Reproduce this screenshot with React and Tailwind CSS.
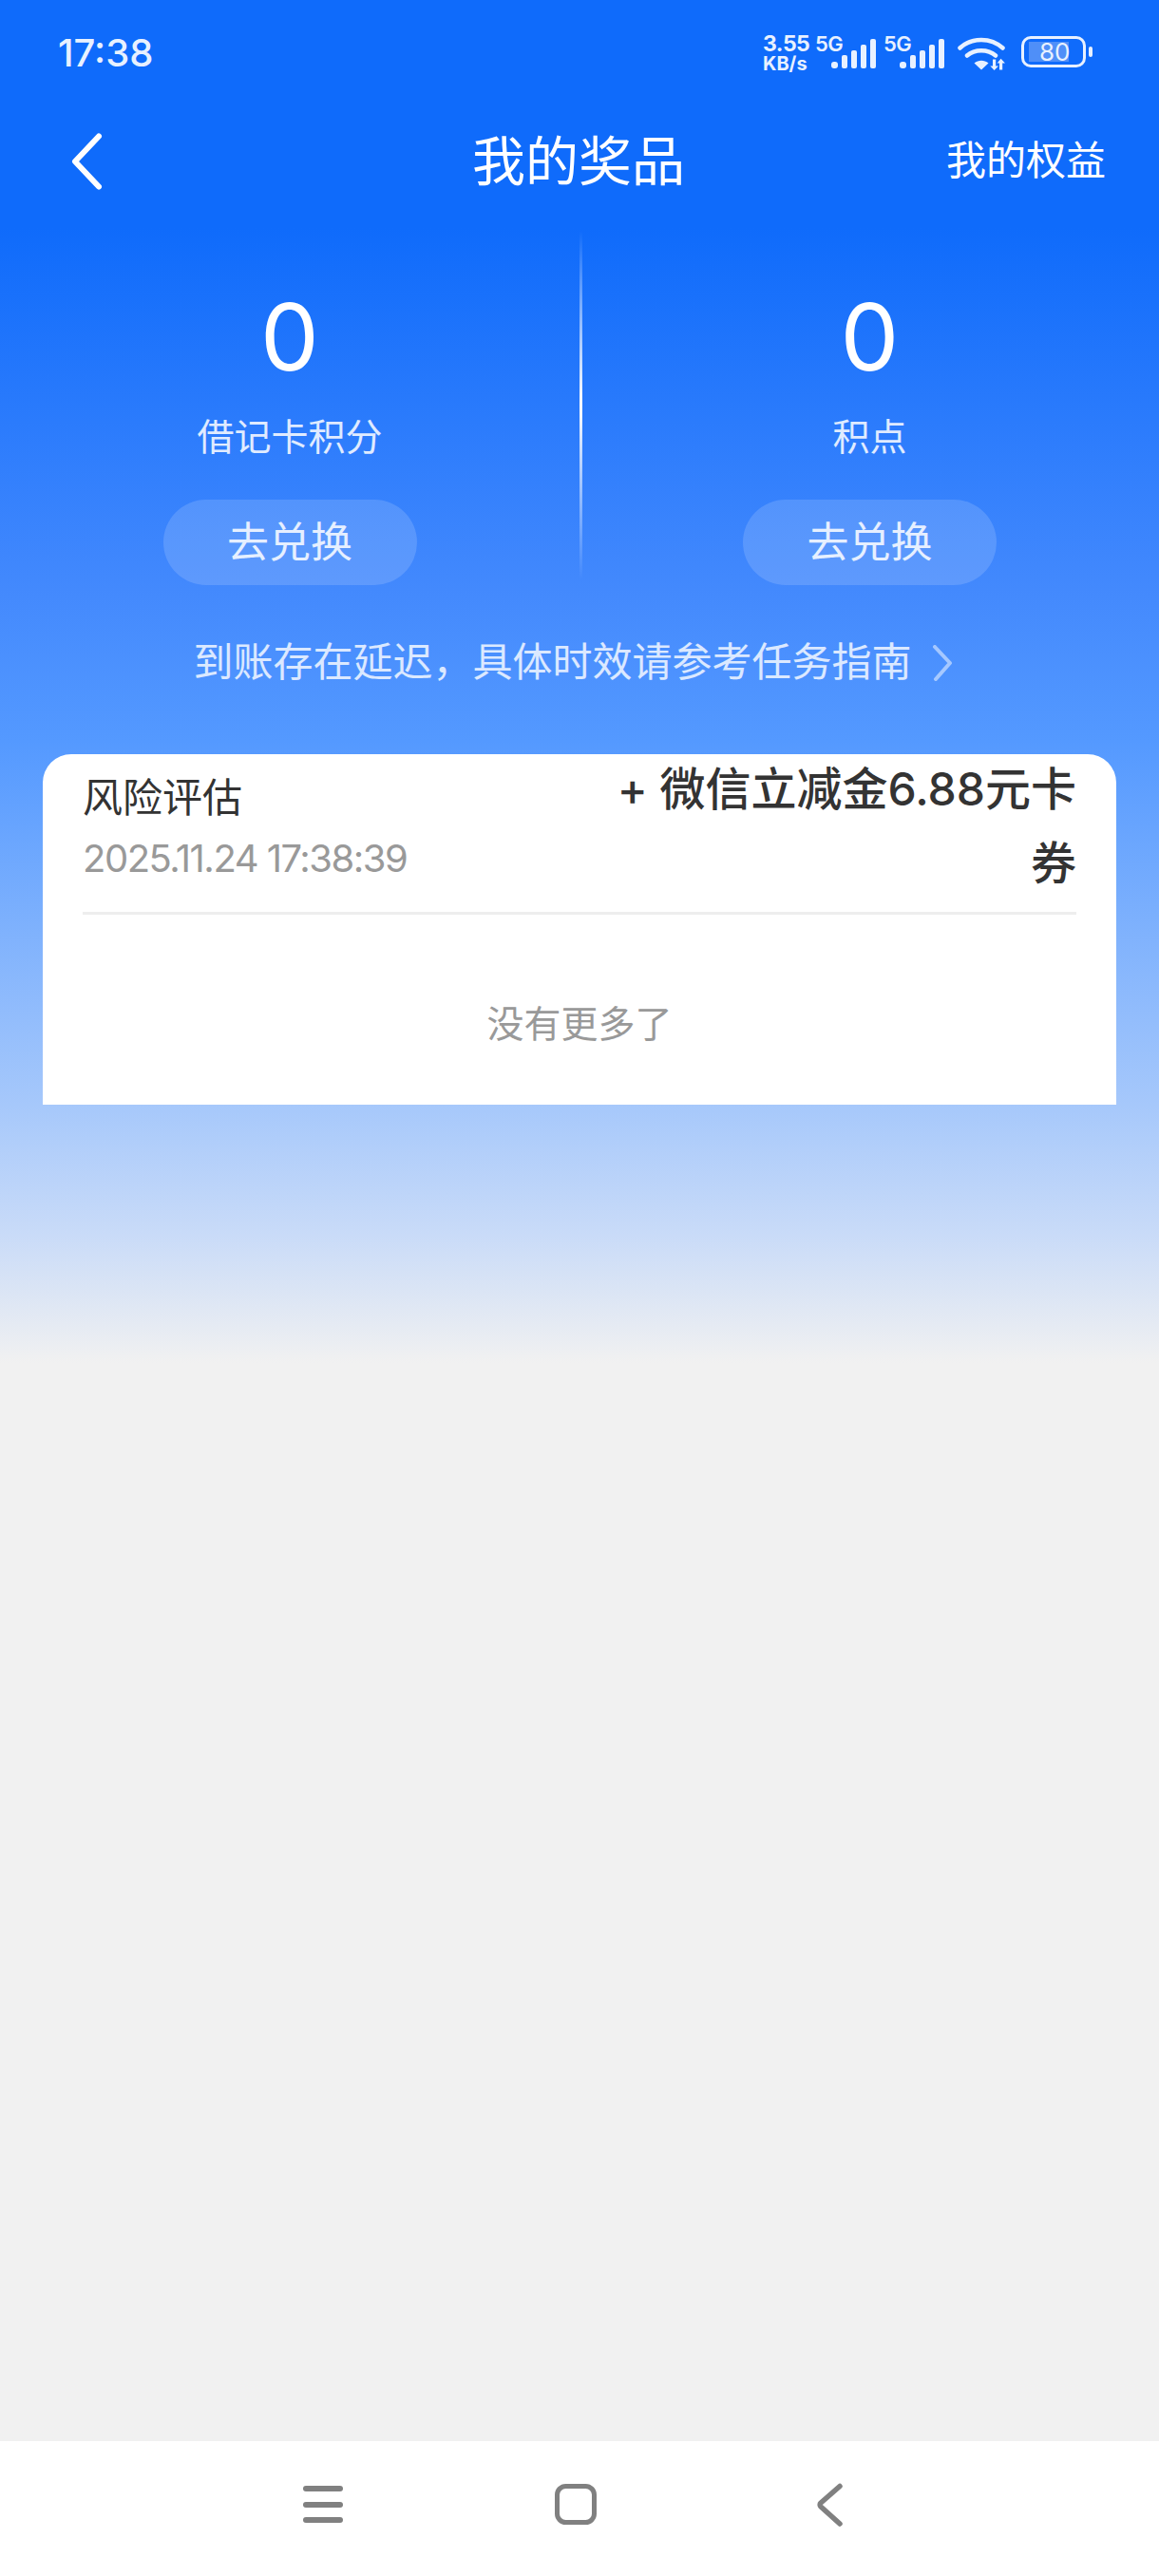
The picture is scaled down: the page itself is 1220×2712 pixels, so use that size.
const sans = 'font-["Inter","Noto_Sans_CJK_SC",sans-serif]';

function Bars() {
  return (
    <svg width="48" height="31" viewBox="0 0 48 31" className="block">
      <g fill="#e8f1ff">
        <rect x="0" y="24" width="7" height="7" rx="3" />
        <rect x="11" y="17" width="6" height="14" rx="2" />
        <rect x="21" y="12" width="6" height="19" rx="2" />
        <rect x="31" y="6" width="6" height="25" rx="2" />
        <rect x="41" y="0" width="6" height="31" rx="2" />
      </g>
    </svg>
  );
}

function Signal() {
  return (
    <div className="relative h-[34px] w-[65px]">
      <span className="absolute left-0 top-[-4px] text-[22px] leading-[24px] font-semibold tracking-[-0.5px] text-[#e8f1ff]">5G</span>
      <div className="absolute left-[17px] top-[3px]"><Bars /></div>
    </div>
  );
}

function Wifi() {
  return (
    <svg width="52" height="36" viewBox="0 0 52 36" className="block">
      <g fill="none" stroke="#e8f1ff" strokeLinecap="round" strokeWidth="4.5">
        <path d="M2.5 12.5C15 1 35 1 47.5 12.5" />
        <path d="M10 20.5C18 13.5 32 13.5 40 20.5" />
      </g>
      <path d="M17.5 28.5C22 24.8 28 24.8 32.5 28.5L25 35.5Z" fill="#e8f1ff" />
      <g fill="#e8f1ff">
        <path d="M37 24.5h3.2v7h2.8l-4.4 4.5-4.2-4.5h2.6z" />
        <path d="M44 35.5v-7h-2.4l4-4.8 4.4 4.8h-2.8v7z" />
      </g>
    </svg>
  );
}

function Battery() {
  return (
    <div className="flex items-center">
      <div className="relative h-[33px] w-[68px] rounded-[10px] border-[3px] border-[#e8f1ff]">
        <div className="absolute left-[5px] top-[3px] h-[21px] w-[42px] bg-[#4f8ff8]" />
        <span className="absolute left-[16px] top-[-1px] text-[26px] leading-[29px] text-[#e8f1ff]">80</span>
      </div>
      <div className="ml-[3px] h-[11px] w-[4px] rounded-full bg-[#e8f1ff]" />
    </div>
  );
}

function Stat({ value, label, width }) {
  return (
    <div className={`flex ${width} flex-col items-center pt-[64px]`}>
      <div className="text-[98px] leading-[96px] text-white">{value}</div>
      <div className="mt-[29px] text-[39px] leading-[56px] text-white/85">{label}</div>
      <button className="mt-[38px] h-[90px] w-[267px] rounded-full bg-white/15 text-[44px] leading-[90px] text-white/85">去兑换</button>
    </div>
  );
}

export default function App() {
  return (
    <div className={`${sans} flex h-[2712px] w-[1220px] flex-col bg-[linear-gradient(180deg,#0f6bfb_0,#0f6bfb_240px,#4389fd_620px,#5499ff_780px,#a6c8fb_1163px,#c9dbf8_1300px,#f1f1f1_1435px)]`}>
      {/* status bar */}
      <div className="flex h-[112px] items-start justify-between pl-[61px] pr-[70px] pt-[37px]">
        <div className="text-[40px] font-medium leading-[38px] text-[#e8f1ff]">17:38</div>
        <div className="flex items-start pt-[1px]">
          <div className="-mt-[2px] mr-[5px] w-[50px] font-bold text-[#e8f1ff]">
            <div className="text-[23px] leading-[21px] tracking-[-0.5px]">3.55</div>
            <div className="text-[20px] leading-[21px]">KB/s</div>
          </div>
          <div className="mr-[7px]"><Signal /></div>
          <Signal />
          <div className="ml-[13px]"><Wifi /></div>
          <div className="ml-[15px]"><Battery /></div>
        </div>
      </div>

      {/* header */}
      <div className="relative flex h-[116px] items-center justify-center pr-[2px]">
        <svg width="40" height="62" viewBox="0 0 40 62" className="absolute left-[71px] top-[27px]">
          <path d="M33 4.5 8 31l25 26.5" fill="none" stroke="#fff" strokeWidth="6" strokeLinecap="round" strokeLinejoin="round" />
        </svg>
        <div className="text-[56px] leading-[72px] text-white">我的奖品</div>
        <div className="absolute right-[56px] top-[29px] text-[42px] leading-[56px] text-white">我的权益</div>
      </div>

      {/* stats */}
      <div className="mt-[15px] flex h-[373px] items-start">
        <Stat value="0" label="借记卡积分" width="w-[610px]" />
        <div className="h-[367px] w-[3px] bg-[linear-gradient(180deg,rgba(255,255,255,0),#fff_50%,rgba(255,255,255,0))]" />
        <Stat value="0" label="积点" width="w-[605px]" />
      </div>

      {/* hint */}
      <div className="mt-[51px] flex h-[60px] items-center justify-center pr-[12px] text-[42px] leading-[60px] text-white/80">
        <span>到账存在延迟，具体时效请参考任务指南</span>
        <svg width="24" height="38" viewBox="0 0 24 38" className="ml-[21px] mt-[2px]">
          <path d="M3 2l16 17L4 36" fill="none" stroke="rgba(255,255,255,0.5)" strokeWidth="4" strokeLinecap="round" strokeLinejoin="round" />
        </svg>
      </div>

      {/* card */}
      <div className="mx-[45px] mt-[67px] h-[369px] rounded-t-[30px] bg-white px-[42px]">
        <div className="box-content flex h-[166px] items-start justify-between border-b-[3px] border-[#eeeeee]">
          <div className="pt-[18px]">
            <div className="text-[42px] leading-[56px] text-[#333333]">风险评估</div>
            <div className="mt-[12px] text-[40px] leading-[48px] tracking-[-1.5px] text-[#999999]">2025.11.24 17:38:39</div>
          </div>
          <div className="-mt-[2px] w-[520px] text-right text-[48px] font-medium leading-[78px] text-[#333333]">+ 微信立减金6.88元卡券</div>
        </div>
        <div className="pt-[87px] text-center text-[39px] leading-[56px] text-[#999999]">没有更多了</div>
      </div>

      <div className="flex-1" />

      {/* nav bar */}
      <div className="relative flex h-[142px] items-start bg-white">
        <svg width="44" height="42" viewBox="0 0 44 42" className="absolute left-[318px] top-[46px]">
          <g fill="none" stroke="#808080" strokeWidth="6" strokeLinecap="round">
            <path d="M4 4h36" />
            <path d="M4 21h36" />
            <path d="M4 37h36" />
          </g>
        </svg>
        <svg width="46" height="46" viewBox="0 0 46 46" className="absolute left-[583px] top-[44px]">
          <rect x="3.5" y="3.5" width="39" height="38" rx="9" fill="none" stroke="#808080" strokeWidth="5" />
        </svg>
        <svg width="30" height="46" viewBox="0 0 30 46" className="absolute left-[858px] top-[44px]">
          <path d="M26 3.5 6 21c-1.2 1.2-1.2 2.8 0 4l20 18" fill="none" stroke="#808080" strokeWidth="5.5" strokeLinecap="round" strokeLinejoin="round" />
        </svg>
      </div>
    </div>
  );
}
